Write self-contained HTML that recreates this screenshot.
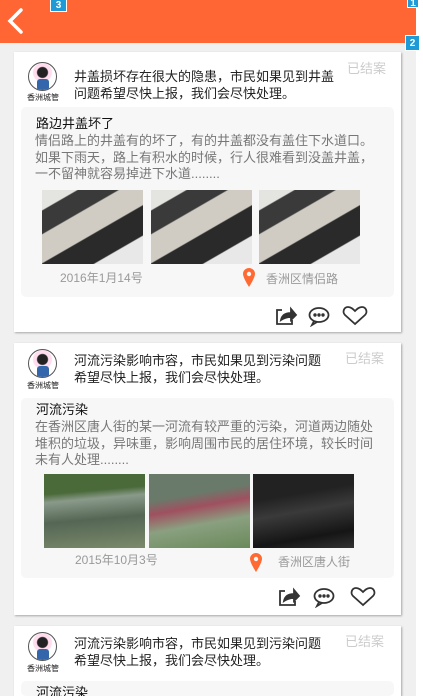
<!DOCTYPE html>
<html><head><meta charset="utf-8"><style>
*{margin:0;padding:0;box-sizing:border-box}
html,body{width:423px;height:696px;overflow:hidden}
body{background:#f0f0f0;font-family:"Liberation Sans","Noto Sans CJK SC",sans-serif;position:relative}
.abs{position:absolute}
.hdr{left:0;top:0;width:416px;height:43px;background:#ff6633}
.strip{left:416px;top:0;width:7px;height:696px;background:#fff}
.badge{background:#1e9ad6;color:#fff;font-size:10px;font-weight:bold;text-align:center;border:1px solid #fff;line-height:13px}
.card{left:14px;width:387px;background:#fff;box-shadow:1px 1px 2px rgba(0,0,0,.3)}
.av{width:29px;height:29px;border-radius:50%;border:1px solid #555;background:radial-gradient(circle at 50% 35%,#222 0 5px,#fde 6px 9px,#fff 10px);overflow:hidden}
.av i{position:absolute;left:8px;top:16px;width:12px;height:12px;background:#36a;border-radius:3px}
.lab{font-size:8px;color:#222;width:40px;text-align:center}
.main{font-size:13px;line-height:17px;color:#222;width:258px}
.done{font-size:13px;color:#ccc}
.box{left:7px;width:373px;background:#f7f7f7;border-radius:5px}
.tt{font-size:13px;color:#111}
.desc{font-size:13px;line-height:16.5px;color:#777;width:345px}
.meta{font-size:12px;color:#999}
.img{width:101px;height:74px}
.p1{background:linear-gradient(150deg,#e4e4e0 0 15%,#3a3a3a 16% 33%,#d0ccc4 34% 55%,#2a2a2a 56% 78%,#e8e8e8 79%)}
</style></head><body>
<div class="abs hdr"></div>
<div class="abs strip"></div>
<svg class="abs" style="left:6px;top:8px" width="18" height="26"><path d="M15 2 L4 13 L15 24" fill="none" stroke="#fff" stroke-width="3.5" stroke-linecap="round"/></svg>
<div class="abs badge" style="left:50px;top:-2px;width:17px;height:14px">3</div>
<div class="abs badge" style="left:407px;top:-4px;width:12px;height:12px">1</div>
<div class="abs badge" style="left:405px;top:35px;width:15px;height:16px;line-height:15px">2</div>

<div class="abs card" style="top:52px;height:280px">
 <div class="abs av" style="left:14px;top:10px"><i></i></div>
 <div class="abs lab" style="left:9px;top:40px">香洲城管</div>
 <div class="abs main" style="left:60px;top:16px;width:264px">井盖损坏存在很大的隐患，市民如果见到井盖问题希望尽快上报，我们会尽快处理。</div>
 <div class="abs done" style="left:333px;top:6px">已结案</div>
 <div class="abs box" style="top:55px;height:190px">
  <div class="abs tt" style="left:15px;top:6px">路边井盖坏了</div>
  <div class="abs desc" style="left:14px;top:26px">情侣路上的井盖有的坏了，有的井盖都没有盖住下水道口。如果下雨天，路上有积水的时候，行人很难看到没盖井盖，一不留神就容易掉进下水道........</div>
  <div class="abs img p1" style="left:21px;top:83px"></div>
  <div class="abs img p1" style="left:130px;top:83px"></div>
  <div class="abs img p1" style="left:238px;top:83px"></div>
  <div class="abs meta" style="left:39px;top:162px">2016年1月14号</div>
  <svg class="abs" style="left:222px;top:161px" width="12" height="19"><path d="M6 0C2.7 0 0 2.6 0 5.8 0 10 6 19 6 19S12 10 12 5.8C12 2.6 9.3 0 6 0z" fill="#ff6a33"/><circle cx="6" cy="6" r="2.2" fill="#f7f7f7"/></svg>
  <div class="abs meta" style="left:245px;top:163px">香洲区情侣路</div>
 </div>
 <svg class="abs" style="left:260px;top:253px" width="100" height="22" fill="none" stroke="#333" stroke-width="1.8">
  <path d="M8 5H3v14h15v-4"/><path d="M7 15c1-5 5-7 10-7V4l5 6-5 5v-3c-4 0-7 1-10 3z" fill="#333"/>
  <ellipse cx="45" cy="10" rx="9.5" ry="7"/><path d="M40 16l-2 4 5-3"/><circle cx="41" cy="10" r=".8" fill="#333"/><circle cx="45" cy="10" r=".8" fill="#333"/><circle cx="49" cy="10" r=".8" fill="#333"/>
  <path d="M81 19L71 10c-3-3-1-8 3-8 3 0 5 2 7 4 2-2 4-4 7-4 4 0 6 5 3 8z"/>
 </svg>
</div>

<div class="abs card" style="top:343px;height:272px">
 <div class="abs av" style="left:14px;top:6px"><i></i></div>
 <div class="abs lab" style="left:9px;top:37px">香洲城管</div>
 <div class="abs main" style="left:60px;top:9px">河流污染影响市容，市民如果见到污染问题希望尽快上报，我们会尽快处理。</div>
 <div class="abs done" style="left:331px;top:5px">已结案</div>
 <div class="abs box" style="top:55px;height:180px">
  <div class="abs tt" style="left:15px;top:1px">河流污染</div>
  <div class="abs desc" style="left:14px;top:21px">在香洲区唐人街的某一河流有较严重的污染，河道两边随处堆积的垃圾，异味重，影响周围市民的居住环境，较长时间未有人处理........</div>
  <div class="abs img" style="left:23px;top:76px;background:linear-gradient(175deg,#4a6a3a 0 25%,#8a9a8a 35%,#556655 60%,#7a8a6a)"></div>
  <div class="abs img" style="left:128px;top:76px;background:linear-gradient(170deg,#6a7a6a 0 30%,#a05060 45%,#8aa080 65%,#6a8a5a)"></div>
  <div class="abs img" style="left:232px;top:76px;background:linear-gradient(170deg,#222 0 30%,#3a3a3a 50%,#151515 80%,#333)"></div>
  <div class="abs meta" style="left:54px;top:153px">2015年10月3号</div>
  <svg class="abs" style="left:229px;top:155px" width="12" height="19"><path d="M6 0C2.7 0 0 2.6 0 5.8 0 10 6 19 6 19S12 10 12 5.8C12 2.6 9.3 0 6 0z" fill="#ff6a33"/><circle cx="6" cy="6" r="2.2" fill="#f7f7f7"/></svg>
  <div class="abs meta" style="left:257px;top:155px">香洲区唐人街</div>
 </div>
 <svg class="abs" style="left:263px;top:243px" width="100" height="22" fill="none" stroke="#333" stroke-width="1.8">
  <path d="M8 5H3v14h15v-4"/><path d="M7 15c1-5 5-7 10-7V4l5 6-5 5v-3c-4 0-7 1-10 3z" fill="#333"/>
  <ellipse cx="47" cy="10" rx="9.5" ry="7"/><path d="M42 16l-2 4 5-3"/><circle cx="43" cy="10" r=".8" fill="#333"/><circle cx="47" cy="10" r=".8" fill="#333"/><circle cx="51" cy="10" r=".8" fill="#333"/>
  <path d="M86 19L76 10c-3-3-1-8 3-8 3 0 5 2 7 4 2-2 4-4 7-4 4 0 6 5 3 8z"/>
 </svg>
</div>

<div class="abs card" style="top:626px;height:70px">
 <div class="abs av" style="left:14px;top:6px"><i></i></div>
 <div class="abs lab" style="left:9px;top:37px">香洲城管</div>
 <div class="abs main" style="left:60px;top:9px">河流污染影响市容，市民如果见到污染问题希望尽快上报，我们会尽快处理。</div>
 <div class="abs done" style="left:331px;top:5px">已结案</div>
 <div class="abs box" style="top:55px;height:15px">
  <div class="abs tt" style="left:15px;top:1px">河流污染</div>
 </div>
</div>
</body></html>
